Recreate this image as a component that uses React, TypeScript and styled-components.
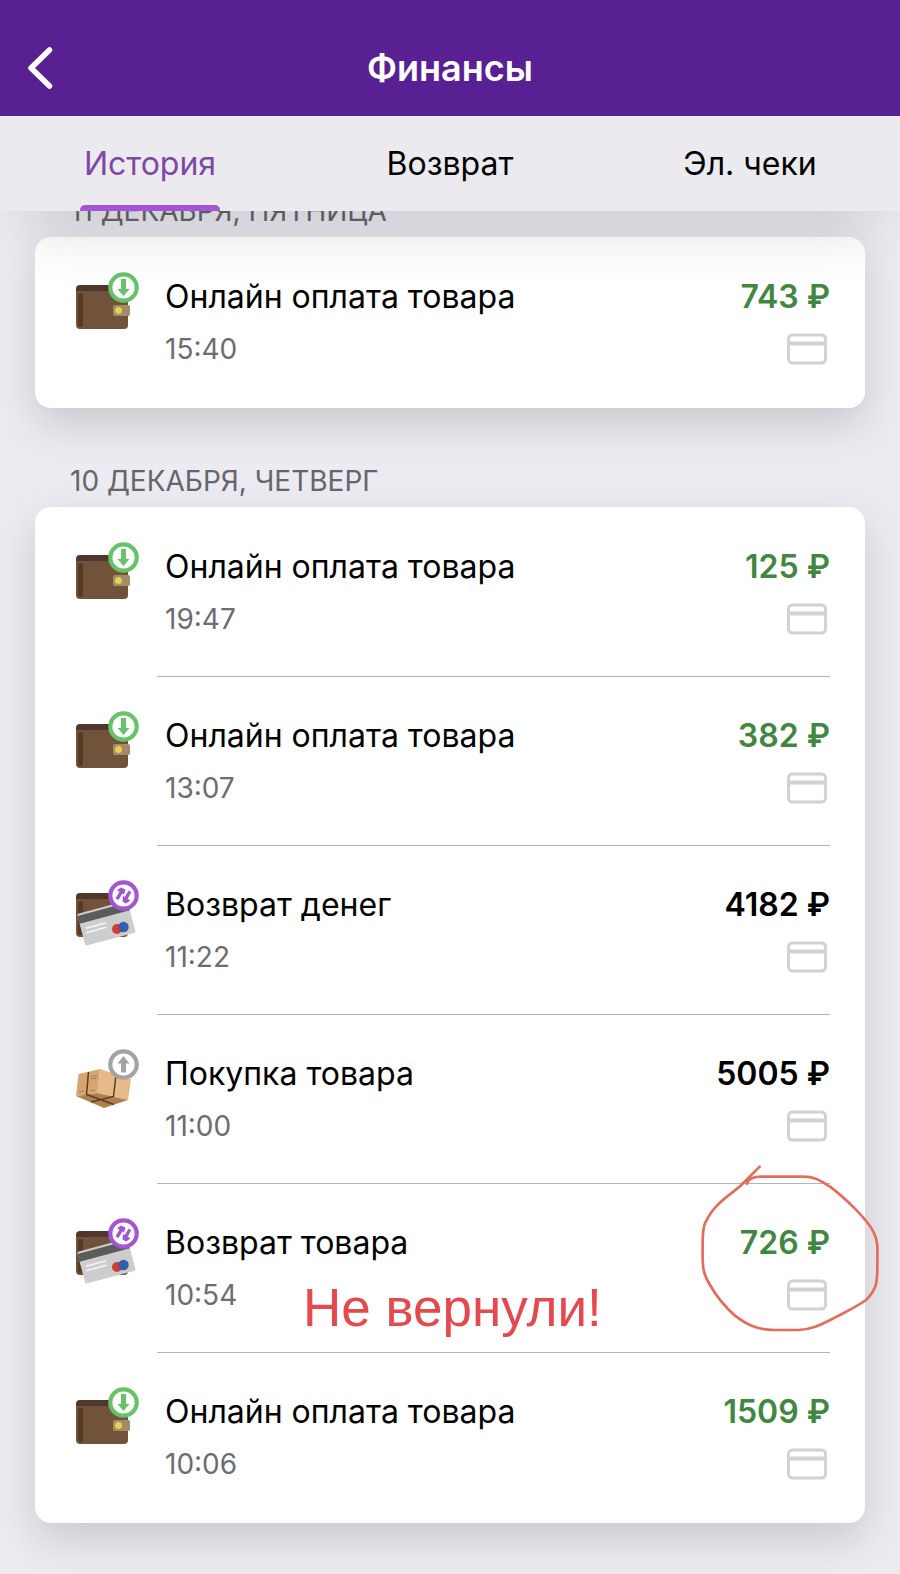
import React from "react";
import styled, { createGlobalStyle } from "styled-components";

const GlobalStyle = createGlobalStyle`
  * { box-sizing: border-box; }
  body {
    margin: 0;
    background: #ecebf1;
    color: #000;
    font-family: Inter, "Liberation Sans", sans-serif;
  }
  button { font: inherit; border: 0; padding: 0; background: none; cursor: pointer; }
`;

const Page = styled.div`
  display: flex;
  flex-direction: column;
  overflow-x: clip;
`;

const TopBar = styled.div`
  position: sticky;
  top: 0;
  z-index: 2;
  box-shadow: 0 48px 56px -24px rgba(0, 0, 0, 0.12);
`;

const Header = styled.header`
  display: grid;
  grid-template-columns: 80px 1fr 80px;
  align-items: center;
  height: 116px;
  padding-top: 20px;
  background: #582092;
  color: #fff;
`;

const BackButton = styled.button`
  display: flex;
  justify-content: center;
  color: inherit;
`;

const PageTitle = styled.h1`
  margin: 0;
  text-align: center;
  font-size: 36px;
  line-height: 44px;
  font-weight: 600;
`;

const Tabs = styled.nav`
  display: grid;
  grid-template-columns: repeat(3, 1fr);
  justify-items: center;
  height: 95px;
  background: #ebeaef;
`;

const Tab = styled.button<{ $active?: boolean }>`
  position: relative;
  padding: 0 4px;
  font-size: 32px;
  line-height: 40px;
  color: ${(p) => (p.$active ? "#7e48a5" : "#000")};

  &::after {
    content: "";
    position: absolute;
    inset: auto 0 0;
    height: 6px;
    border-radius: 5px 5px 0 0;
    background: ${(p) => (p.$active ? "#a355d6" : "transparent")};
  }
`;

const History = styled.main`
  display: flex;
  flex-direction: column;
  gap: 55px;
  margin-top: -18px;
  padding: 0 35px 50px;
`;

const DayTitle = styled.h2`
  margin: 0 0 8px;
  padding-left: 35px;
  font-size: 28px;
  line-height: 36px;
  font-weight: 400;
  color: #66656b;
`;

const Card = styled.ul`
  margin: 0;
  padding: 1px 0;
  list-style: none;
  background: #fff;
  border-radius: 16px;
  box-shadow: 0 16px 40px rgba(0, 0, 0, 0.15);
`;

const Row = styled.li`
  position: relative;
  display: flex;
  height: 169px;
  padding: 0 35px 0 41px;
`;

const IconBox = styled.div`
  width: 81px;
  flex: none;
  padding-top: 32px;
`;

const Body = styled.div<{ $divided: boolean }>`
  flex: 1;
  display: grid;
  grid-template-columns: 1fr auto;
  grid-template-rows: 40px 36px;
  row-gap: 14px;
  align-content: start;
  padding: 39px 0 0 8px;
  border-bottom: 1px solid ${(p) => (p.$divided ? "#b4b4b7" : "transparent")};
`;

const Name = styled.span`
  font-size: 32px;
  line-height: 40px;
`;

const Amount = styled.span<{ $income: boolean }>`
  justify-self: end;
  font-size: 32px;
  line-height: 40px;
  font-weight: 600;
  color: ${(p) => (p.$income ? "#42873f" : "#000")};
`;

const Time = styled.time`
  font-size: 28px;
  line-height: 36px;
  color: #6c6c71;
`;

const CardMark = styled.div`
  display: flex;
  justify-content: flex-end;
  align-items: center;
  padding-right: 3px;
`;

const Remark = styled.strong`
  position: absolute;
  left: 268px;
  bottom: 15px;
  font-family: "Liberation Sans", sans-serif;
  font-weight: 400;
  font-size: 53px;
  line-height: 60px;
  color: #e5484d;
`;

const Scribble = styled.svg`
  position: absolute;
  right: -35px;
  top: -34px;
  pointer-events: none;
`;

type Kind = "payment" | "refund" | "purchase";

const Wallet = () => (
  <>
    <rect x="0" y="15" width="50" height="20" rx="4" fill="#4f382b" />
    <path d="M0 21h48q4 0 4 4v30q0 4-4 4H4q-4 0-4-4z" fill="#70533a" />
    <rect x="2" y="23" width="5" height="34" rx="2" fill="#573b21" />
  </>
);

function KindIcon({ kind }: { kind: Kind }) {
  const color = { payment: "#66c367", refund: "#a355d6", purchase: "#a3a3a3" }[kind];
  return (
    <svg width="66" height="70" viewBox="0 0 66 70" aria-hidden="true">
      {kind === "payment" && (
        <>
          <Wallet />
          <rect x="37" y="35" width="17" height="11" rx="2" fill="#a68b67" />
          <circle cx="42.500" cy="40.500" r="3.500" fill="#e5d150" />
        </>
      )}
      {kind === "refund" && (
        <>
          <Wallet />
          <g transform="translate(1 36) rotate(-15)">
            <rect x="0" y="0" width="52" height="33" rx="2" fill="#cdcdcd" />
            <rect x="0" y="2" width="52" height="8" fill="#5b5b5b" />
            <path d="M5 16h21M4 20.500h21" stroke="#f6f6f6" strokeWidth="1.600" />
          </g>
          <circle cx="41" cy="51" r="5" fill="#d33b33" />
          <circle cx="47.500" cy="49" r="5.200" fill="#335fae" />
        </>
      )}
      {kind === "purchase" && (
        <>
          <path d="M2.500 27L24 22L21.500 46L0 49z" fill="#d5a672" />
          <path d="M24 22L55 32L52 53L21.500 46z" fill="#e6ba86" />
          <path d="M0 49L21.500 46L52 53L28 61z" fill="#b07f4e" />
          <path d="M12.500 25L10.500 47.500L38 57.500M40 28L37.500 49.500L15 55" fill="none" stroke="#5a4029" strokeWidth="1.500" />
          <path d="M15 29.500l6-1M15 32l6-1M3 45l5-1M14 44l5-1" stroke="#a97d50" strokeWidth="1" />
        </>
      )}
      <circle cx="47.500" cy="17.500" r="13.200" fill="#fff" stroke={color} strokeWidth="4.200" />
      {kind === "payment" && <path d="M45 9h5v10h3.500l-6 7l-6-7h3.500z" fill={color} />}
      {kind === "purchase" && <path d="M45 25.500h5v-9h3.500l-6-7.500l-6 7.500h3.500z" fill={color} />}
      {kind === "refund" && (
        <path
          d="M45 9.500L49.500 11.500L48 16.500L46.300 15.500L42.500 22L39.500 20.300L43.500 13.700L41 12.300z M50 25.500L46.500 23.500L47 18L48.800 19L52.500 12.600L55.300 14.200L51.700 20.700L54.500 22.400z"
          fill={color}
        />
      )}
    </svg>
  );
}

const BankCard = () => (
  <svg width="40" height="32" viewBox="0 0 40 32" fill="none" stroke="#d1d1d6" aria-hidden="true">
    <rect x="1.500" y="2" width="37" height="28" rx="4" strokeWidth="3" />
    <path d="M1 10.500h38" strokeWidth="4" />
  </svg>
);

interface Operation {
  kind: Kind;
  name: string;
  time: string;
  amount: number;
  income: boolean;
  remark?: string;
}

const days: { title: string; items: Operation[] }[] = [
  {
    title: "11 ДЕКАБРЯ, ПЯТНИЦА",
    items: [{ kind: "payment", name: "Онлайн оплата товара", time: "15:40", amount: 743, income: true }],
  },
  {
    title: "10 ДЕКАБРЯ, ЧЕТВЕРГ",
    items: [
      { kind: "payment", name: "Онлайн оплата товара", time: "19:47", amount: 125, income: true },
      { kind: "payment", name: "Онлайн оплата товара", time: "13:07", amount: 382, income: true },
      { kind: "refund", name: "Возврат денег", time: "11:22", amount: 4182, income: false },
      { kind: "purchase", name: "Покупка товара", time: "11:00", amount: 5005, income: false },
      { kind: "refund", name: "Возврат товара", time: "10:54", amount: 726, income: true, remark: "Не вернули!" },
      { kind: "payment", name: "Онлайн оплата товара", time: "10:06", amount: 1509, income: true },
    ],
  },
];

export default function App() {
  return (
    <Page>
      <GlobalStyle />
      <TopBar>
        <Header>
          <BackButton aria-label="Назад">
            <svg width="32" height="44" viewBox="0 0 32 44" fill="none" stroke="#fff" strokeWidth="5.500" strokeLinecap="round" strokeLinejoin="round">
              <path d="M25.500 4L7 22L25.500 40" />
            </svg>
          </BackButton>
          <PageTitle>Финансы</PageTitle>
        </Header>
        <Tabs>
          <Tab $active>История</Tab>
          <Tab>Возврат</Tab>
          <Tab>Эл. чеки</Tab>
        </Tabs>
      </TopBar>
      <History>
        {days.map((day) => (
          <section key={day.title}>
            <DayTitle>{day.title}</DayTitle>
            <Card>
              {day.items.map((op, i) => (
                <Row key={op.time}>
                  <IconBox>
                    <KindIcon kind={op.kind} />
                  </IconBox>
                  <Body $divided={i < day.items.length - 1}>
                    <Name>{op.name}</Name>
                    <Amount $income={op.income}>{op.amount} ₽</Amount>
                    <Time>{op.time}</Time>
                    <CardMark>
                      <BankCard />
                    </CardMark>
                  </Body>
                  {op.remark && (
                    <>
                      <Remark>{op.remark}</Remark>
                      <Scribble width="220" height="200" viewBox="0 0 660 600" fill="none" stroke="#e66c5a" strokeWidth="8" strokeLinecap="round" aria-hidden="true">
                        <path d="M239 50L187 102C150 138 104 156 75 220C67 240 68 260 68 290C67 350 68 370 90 405C110 440 140 475 165 497C210 532 240 539 285 540H355C400 538 430 520 470 500C500 484 530 470 558 450C590 420 592 395 592 350C592 300 596 275 580 245C560 205 490 140 450 110C420 92 405 80 370 80H245C220 80 205 85 201 101" />
                      </Scribble>
                    </>
                  )}
                </Row>
              ))}
            </Card>
          </section>
        ))}
      </History>
    </Page>
  );
}
